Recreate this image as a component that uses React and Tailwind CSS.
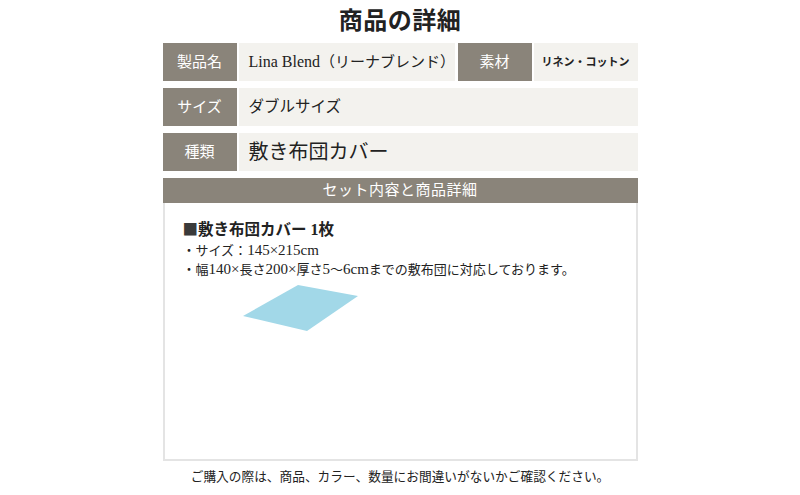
export default function App() {
  const L = "text-[15px]";
  return (
    <div className="w-[800px] h-[495px] bg-white overflow-hidden text-[#222]" style={{ fontFamily: '"Liberation Serif", "Noto Sans CJK JP", serif' }}>
      <div className="w-[475px] mx-auto">
        <div className="h-[43px] flex items-center justify-center pb-[2px]">
          <h1 className="text-[24px] font-bold leading-none tracking-[0.5px]">商品の詳細</h1>
        </div>
        <div className="flex flex-col gap-[7px]">
          <div className="flex h-[38px] gap-[2px]">
            <div className="w-[74px] bg-[#8a847a] text-white text-[15px] flex items-center justify-center">製品名</div>
            <div className="w-[216px] bg-[#f3f2ee] text-[15px] flex items-center pl-[10px] whitespace-nowrap">
              <span><span className="text-[16px]">Lina Blend</span>（リーナブレンド）</span>
            </div>
            <div className="w-[74px] ml-[1px] bg-[#8a847a] text-white text-[15px] flex items-center justify-center">素材</div>
            <div className="flex-1 bg-[#f3f2ee] text-[11px] font-bold flex items-center pl-[8px]">リネン・コットン</div>
          </div>
          <div className="flex h-[38px] gap-[2px]">
            <div className="w-[74px] bg-[#8a847a] text-white text-[15px] flex items-center justify-center">サイズ</div>
            <div className="flex-1 bg-[#f3f2ee] text-[15.5px] flex items-center pl-[10px]">ダブルサイズ</div>
          </div>
          <div className="flex h-[38px] gap-[2px]">
            <div className="w-[74px] bg-[#8a847a] text-white text-[15px] flex items-center justify-center">種類</div>
            <div className="flex-1 bg-[#f3f2ee] text-[20px] flex items-center pl-[10px]">敷き布団カバー</div>
          </div>
          <div className="h-[25px] bg-[#8a847a] text-white text-[15px] tracking-[0.5px] flex items-center justify-center">セット内容と商品詳細</div>
        </div>
        <div className="h-[258px] border-2 border-t-0 border-[#e4e4e4] pl-[18px] pt-[14px]">
          <div className="text-[15.5px] font-bold leading-[22px]"><span className="text-[#3a3a3a]" style={{ fontFamily: '"Noto Sans CJK JP", sans-serif' }}>■</span>敷き布団カバー <span className="text-[16px]">1</span>枚</div>
          <div className="text-[13px] leading-[19px]">・サイズ：<span className={L}>145×215cm</span></div>
          <div className="text-[13px] leading-[19px]">・幅<span className={L}>140×</span>長さ<span className={L}>200×</span>厚さ<span className={L}>5</span>〜<span className={L}>6cm</span>までの敷布団に対応しております。</div>
          <svg width="120" height="50" viewBox="0 0 120 50" className="block ml-[60px] mt-[5px]">
            <polygon points="55,1 115,12 64,47 0,32" fill="#a2d8e8" />
          </svg>
        </div>
        <div className="h-[34px] flex items-center justify-center text-[12.7px]">ご購入の際は、商品、カラー、数量にお間違いがないかご確認ください。</div>
      </div>
    </div>
  );
}
